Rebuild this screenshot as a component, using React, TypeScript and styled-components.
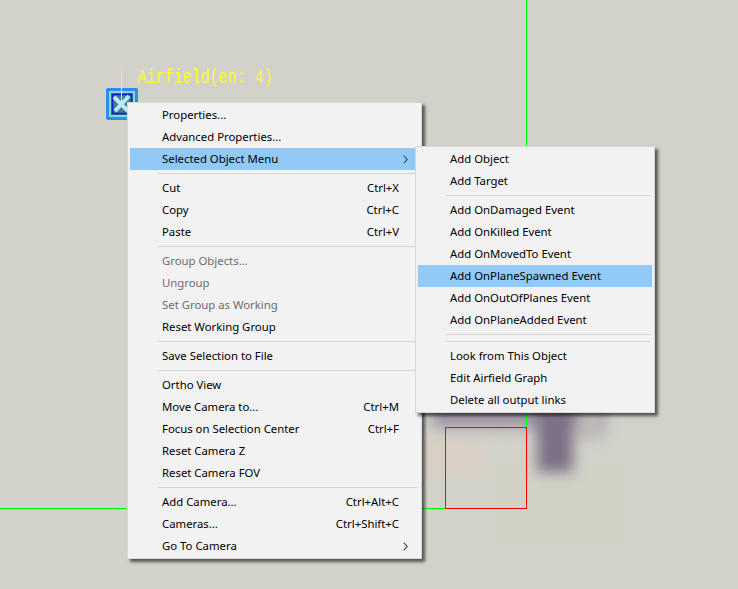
import React from "react";
import styled, { createGlobalStyle } from "styled-components";

const Global = createGlobalStyle`
  html, body { margin: 0; padding: 0; background: #d2d2ca; }
  #root { width: 738px; height: 589px; overflow: hidden; }
`;

const Viewport = styled.div`
  position: relative;
  width: 738px;
  height: 589px;
  overflow: hidden;
  background: #d2d2ca;
`;

const Scene = styled.svg`
  position: absolute;
  inset: 0;
`;

const ObjectLabel = styled.span`
  position: absolute;
  left: 138px;
  top: 69px;
  font: 15px/20px "Liberation Mono", monospace;
  color: #ffff30;
  white-space: pre;
  transform: scaleY(1.3);
  transform-origin: left center;
`;

const ObjectIcon = styled.svg`
  position: absolute;
  left: 106px;
  top: 88px;
  overflow: visible;
`;

const Menu = styled.div<{ $left: number; $top: number; $width: number }>`
  position: absolute;
  left: ${(p) => p.$left}px;
  top: ${(p) => p.$top}px;
  width: ${(p) => p.$width}px;
  box-sizing: border-box;
  display: flex;
  flex-direction: column;
  padding: 1px 2px;
  background: #f2f2f2;
  border: 1px solid #d8d8d8;
  box-shadow: 3px 3px 3px rgba(0, 0, 0, 0.6);
  font: 11.35px/22px "Noto Sans", sans-serif;
  color: #000;
`;

const Row = styled.div<{ $active?: boolean; $disabled?: boolean }>`
  display: flex;
  align-items: center;
  height: 22px;
  padding: 0 11px 0 32px;
  background: ${(p) => (p.$active ? "#91c9f7" : "transparent")};
  color: ${(p) => (p.$disabled ? "#6d6d6d" : "#000")};
  white-space: nowrap;
`;

const Label = styled.span`
  flex: 1;
`;

const Shortcut = styled.span`
  margin-right: 9px;
`;

const Chevron = styled.svg`
  flex: none;
`;

const SeparatorLine = styled.div`
  flex: none;
  height: 1px;
  margin: 3px 2px 3px 28px;
  background: #d7d7d7;
`;

type Entry =
  | "-"
  | { t: string; k?: string; sub?: boolean; active?: boolean; off?: boolean };

const mainItems: Entry[] = [
  { t: "Properties..." },
  { t: "Advanced Properties..." },
  { t: "Selected Object Menu", sub: true, active: true },
  "-",
  { t: "Cut", k: "Ctrl+X" },
  { t: "Copy", k: "Ctrl+C" },
  { t: "Paste", k: "Ctrl+V" },
  "-",
  { t: "Group Objects...", off: true },
  { t: "Ungroup", off: true },
  { t: "Set Group as Working", off: true },
  { t: "Reset Working Group" },
  "-",
  { t: "Save Selection to File" },
  "-",
  { t: "Ortho View" },
  { t: "Move Camera to...", k: "Ctrl+M" },
  { t: "Focus on Selection Center", k: "Ctrl+F" },
  { t: "Reset Camera Z" },
  { t: "Reset Camera FOV" },
  "-",
  { t: "Add Camera...", k: "Ctrl+Alt+C" },
  { t: "Cameras...", k: "Ctrl+Shift+C" },
  { t: "Go To Camera", sub: true },
];

const subItems: Entry[] = [
  { t: "Add Object" },
  { t: "Add Target" },
  "-",
  { t: "Add OnDamaged Event" },
  { t: "Add OnKilled Event" },
  { t: "Add OnMovedTo Event" },
  { t: "Add OnPlaneSpawned Event", active: true },
  { t: "Add OnOutOfPlanes Event" },
  { t: "Add OnPlaneAdded Event" },
  "-",
  "-",
  { t: "Look from This Object" },
  { t: "Edit Airfield Graph" },
  { t: "Delete all output links" },
];

const Items = ({ items }: { items: Entry[] }) => (
  <>
    {items.map((e, i) =>
      e === "-" ? (
        <SeparatorLine key={i} />
      ) : (
        <Row key={i} $active={e.active} $disabled={e.off}>
          <Label>{e.t}</Label>
          {e.k && <Shortcut>{e.k}</Shortcut>}
          {e.sub && (
            <Chevron width="5" height="9" viewBox="0 0 5 9">
              <path d="M0.7 0.7 L4.3 4.5 L0.7 8.3" fill="none" stroke="#4a4a4a" strokeWidth="1.1" />
            </Chevron>
          )}
        </Row>
      )
    )}
  </>
);

export default function App() {
  return (
    <Viewport>
      <Global />
      <Scene width="738" height="589" viewBox="0 0 738 589">
        <defs>
          <filter id="soft" x="-100%" y="-100%" width="300%" height="300%">
            <feGaussianBlur stdDeviation="7" />
          </filter>
          <filter id="wide" x="-50%" y="-50%" width="200%" height="200%">
            <feGaussianBlur stdDeviation="12" />
          </filter>
        </defs>
        <rect x="490" y="460" width="140" height="90" fill="#d1d1c6" filter="url(#wide)" />
        <rect x="420" y="440" width="64" height="36" fill="#d9cfc4" filter="url(#soft)" />
        <rect x="432" y="396" width="172" height="32" fill="#9f95a5" filter="url(#soft)" />
        <rect x="575" y="410" width="30" height="30" fill="#bdb9ba" filter="url(#soft)" />
        <rect x="537" y="410" width="36" height="62" fill="#7d6f85" filter="url(#soft)" />
        <rect x="526" y="0" width="1" height="428" fill="#00ff00" />
        <rect x="0" y="508" width="446" height="1" fill="#00ff00" />
        <rect x="445.5" y="427.5" width="81" height="81" fill="none" stroke="#ff0000" strokeWidth="1" />
      </Scene>
      <ObjectLabel>Airfield(en: 4)</ObjectLabel>
      <ObjectIcon width="32" height="32" viewBox="0 0 32 32">
        <rect x="0" y="0" width="32" height="32" rx="2" fill="#2d8fea" />
        <rect x="3" y="3" width="26" height="26" fill="#8ed1d6" />
        <rect x="5" y="5" width="22" height="22" fill="#3f7f93" />
        <rect x="6.5" y="6.5" width="19" height="19" fill="#3f7f93" stroke="#0a1fc8" strokeWidth="1.5" />
        <path d="M8 9 L23 24 M23 8 L9 23" stroke="#bfe8f8" strokeWidth="4" fill="none" />
        <line x1="15.5" y1="-20" x2="15.5" y2="16" stroke="#eeee78" strokeWidth="1" />
      </ObjectIcon>
      <Menu $left={127} $top={102} $width={295}>
        <Items items={mainItems} />
      </Menu>
      <Menu $left={415} $top={146} $width={240}>
        <Items items={subItems} />
      </Menu>
    </Viewport>
  );
}
